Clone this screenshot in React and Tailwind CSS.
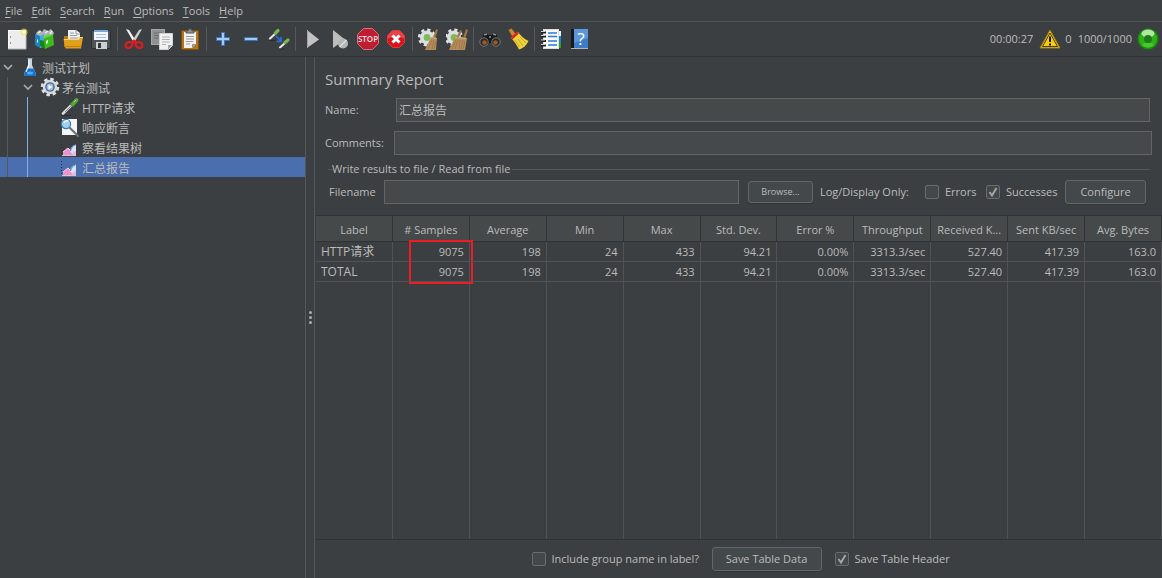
const MENUS = ['File', 'Edit', 'Search', 'Run', 'Options', 'Tools', 'Help']

const COLUMNS = [
  'Label', '# Samples', 'Average', 'Min', 'Max', 'Std. Dev.', 'Error %',
  'Throughput', 'Received K...', 'Sent KB/sec', 'Avg. Bytes',
]

const ROWS = [
  ['HTTP请求', '9075', '198', '24', '433', '94.21', '0.00%', '3313.3/sec', '527.40', '417.39', '163.0'],
  ['TOTAL', '9075', '198', '24', '433', '94.21', '0.00%', '3313.3/sec', '527.40', '417.39', '163.0'],
]

function Icon({ children }) {
  return (
    <svg width="22" height="22" viewBox="0 0 22 22" fill="none" aria-hidden="true">
      {children}
    </svg>
  )
}

/* ---------- toolbar icons ---------- */

function NewIcon() {
  return (
    <Icon>
      <rect x="2.5" y="2.5" width="17" height="18" fill="#ececec" stroke="#fafafa" />
      <path d="M2 21h18V5" stroke="#b5b5b5" />
      <path d="M4.5 8v2M4.5 14v2" stroke="#999" />
      <circle cx="18" cy="4" r="3.6" fill="#f3e65a" opacity="0.6" />
      <circle cx="18" cy="4" r="1.8" fill="#fffbd0" />
    </Icon>
  )
}

function TemplatesIcon() {
  return (
    <Icon>
      <path d="M2 5l3-3 3 2 2-3 4 2 3-2 3 4-3 6H3z" fill="#aeb4b6" />
      <path d="M4 5l3-2M11 5l3-2M16 6l2-3" stroke="#eef1f2" strokeWidth="1.4" />
      <path d="M1 6l5 2v12l-5-3z" fill="#1c84c4" />
      <path d="M6 8l4-2v13l-4 1z" fill="#46a9de" />
      <path d="M3 11l1 1v3l-1-1z" fill="#e3f4ff" />
      <path d="M6 12l5 1v8l-5-3z" fill="#16851d" />
      <path d="M10 10l9-3 1 10-9 4z" fill="#3fba1d" />
      <path d="M10 10l9-3-4-1-7 3z" fill="#6fd33f" />
      <path d="M12 13l2-1v3l-2 1z" fill="#d9ffc4" />
    </Icon>
  )
}

function OpenIcon() {
  return (
    <Icon>
      <path d="M2 8h6l2 2h9v9H2z" fill="#b97a0a" />
      <path d="M6 2h8l4 3v9H6z" fill="#efefef" />
      <path d="M14 2v4h4M8 5h4M8 7.500h7M8 10h8" stroke="#9da0a1" />
      <path d="M1.500 11h15l1-2h3.500l-2 11.500H3.500z" fill="#dfa01e" />
      <path d="M2 11.500h15l1-2h3" stroke="#f9d36b" />
      <path d="M3 18.500h16" stroke="#c0810f" />
    </Icon>
  )
}

function SaveIcon() {
  return (
    <Icon>
      <path d="M1.500 2.500h18l1 1v17h-18l-1-1z" fill="#4e5356" stroke="#2b2e30" />
      <rect x="4" y="2" width="14" height="10" fill="#f2f6fb" />
      <rect x="4" y="2" width="14" height="2" fill="#7ba6d8" />
      <path d="M6 6.500h10M6 9.500h10" stroke="#a5bfdf" />
      <rect x="6" y="14" width="11" height="7" fill="#cdd0d1" />
      <rect x="8" y="15" width="3" height="5" fill="#323638" />
    </Icon>
  )
}

function CutIcon() {
  return (
    <Icon>
      <path d="M3 1l3 1 7 11-2 2z" fill="#f2f2f2" />
      <path d="M19 1l-3 1-7 11 2 2z" fill="#cfcfcf" />
      <path d="M9 12.500l2-1 2 1 1 3h-6z" fill="#cf1f24" />
      <ellipse cx="6" cy="17" rx="3.500" ry="2.800" stroke="#df1c22" strokeWidth="2.200" transform="rotate(-25 6 17)" />
      <ellipse cx="16" cy="17" rx="3.500" ry="2.800" stroke="#df1c22" strokeWidth="2.200" transform="rotate(25 16 17)" />
    </Icon>
  )
}

function CopyIcon() {
  return (
    <Icon>
      <rect x="0.500" y="1.500" width="13" height="15" fill="#8f9192" stroke="#a5a7a8" />
      <path d="M3 5h8M3 7.500h8M3 10h5" stroke="#6c6e6f" />
      <path d="M8.500 5.500h13v12l-4 4h-9z" fill="#f1f1f1" stroke="#d2d2d2" />
      <path d="M11 9h8M11 11.500h8M11 14h8M11 16.500h4" stroke="#b4b4b4" />
      <path d="M21 17h-4v4.500z" fill="#a4a4a4" />
    </Icon>
  )
}

function PasteIcon() {
  return (
    <Icon>
      <rect x="2.500" y="2.500" width="17" height="19" rx="1" fill="#b3741c" stroke="#80500e" />
      <path d="M5 4h12v12l-4 4H5z" fill="#f1f1f1" />
      <path d="M7 8.500h8M7 11h8M7 13.500h7M7 16h4" stroke="#9c9c9c" />
      <path d="M17 16h-4v4z" fill="#9a9a9a" />
      <path d="M7 5V3h2l1-2h2l1 2h2v2z" fill="#8f9496" stroke="#54585a" />
    </Icon>
  )
}

function PlusIcon() {
  return (
    <Icon>
      <path d="M9.500 4.500h3v5h5v3h-5v5h-3v-5h-5v-3h5z" fill="#a3caf3" stroke="#3a74ba" />
    </Icon>
  )
}

function MinusIcon() {
  return (
    <Icon>
      <rect x="4.500" y="9.500" width="13" height="3" fill="#a3caf3" stroke="#3a74ba" />
    </Icon>
  )
}

function ToggleIcon() {
  return (
    <Icon>
      <path d="M2 10.500l6-5.500" stroke="#e4e4e4" strokeWidth="2.200" strokeLinecap="round" />
      <path d="M7.500 5l2.500-2.500" stroke="#78b750" strokeWidth="3.200" strokeLinecap="round" />
      <path d="M12 19.500l6-5.500" stroke="#e4e4e4" strokeWidth="2.200" strokeLinecap="round" />
      <path d="M17 14.500l3-2.500" stroke="#78b750" strokeWidth="3.200" strokeLinecap="round" />
      <path d="M8 8l4.500 4.500M13 9v4.500H8.500" stroke="#2573e6" strokeWidth="1.600" />
      <path d="M1 12.500h6M11 21h6" stroke="#2b2d2e" />
    </Icon>
  )
}

function StartIcon() {
  return (
    <Icon>
      <path d="M6 2l12 9.500L6 20z" fill="#c3c3c3" />
      <path d="M6.500 2v18" stroke="#a0a2a3" />
    </Icon>
  )
}

function StartNoTimersIcon() {
  return (
    <Icon>
      <path d="M4 2l12 9.500L4 20z" fill="#bdbdbd" />
      <circle cx="14" cy="15.500" r="5" fill="#b4b6b6" />
      <path d="M10.500 19l7-7" stroke="#dcdcdc" strokeWidth="1.600" />
    </Icon>
  )
}

function StopIcon() {
  return (
    <Icon>
      <path d="M6.500 0.500h9l6 6v9l-6 6h-9l-6-6v-9z" fill="#bf1e31" stroke="#d4707b" />
      <text x="11" y="14" textAnchor="middle" fontSize="8" fontWeight="600" fontFamily="Open Sans, sans-serif" fill="#f6dde0">
        STOP
      </text>
    </Icon>
  )
}

function ShutdownIcon() {
  return (
    <Icon>
      <path d="M7.500 2.500h7l5 5v7l-5 5h-7l-5-5v-7z" fill="#d9131a" stroke="#e0393e" />
      <path d="M7.500 3h7l4.500 4.500v3c-5-2-11-2-16 0v-3z" fill="#ee5a5d" opacity="0.700" />
      <path d="M7.500 7.500l7 7M14.500 7.500l-7 7" stroke="#fff" strokeWidth="3" />
    </Icon>
  )
}

function GearBase({ cx }) {
  return (
    <g>
      <circle cx={cx} cy="9.500" r="7.800" stroke="#dfe1e2" strokeWidth="2.600" strokeDasharray="3.200 2.926" />
      <circle cx={cx} cy="9.500" r="7" fill="#dcdfe0" />
      <circle cx={cx} cy="9.500" r="3.400" fill="#97ab8c" />
      <circle cx={cx} cy="9.500" r="2.600" fill="#6fc637" />
    </g>
  )
}

function ClearIcon() {
  return (
    <Icon>
      <GearBase cx="9" />
      <path d="M18 1l2 1-3 9-2-1z" fill="#9c7548" />
      <path d="M13 9l6 1-1 12H7z" fill="#b58d5d" />
      <path d="M14 12l-4 9M16 12l-2 9M18 13l-2 8" stroke="#94703f" strokeWidth="0.700" />
      <path d="M13 9.500l5.500 1" stroke="#cfae82" />
    </Icon>
  )
}

function ClearAllIcon() {
  return (
    <Icon>
      <GearBase cx="8" />
      <path d="M14 2l2 1-4 8-2-1zM20 1l2 1-3 9-2-1z" fill="#9c7548" />
      <path d="M9 9l12 1-2 12H3z" fill="#b58d5d" />
      <path d="M10 12l-4 9M12 12l-3 9M14 12l-1 9M17 12l-2 9M19 13l-2 8" stroke="#94703f" strokeWidth="0.700" />
      <path d="M9 9.500l11 1" stroke="#cfae82" />
    </Icon>
  )
}

function SearchIcon() {
  return (
    <Icon>
      <path d="M4 8c0-3 4-4 5-1h4c1-3 5-2 5 1l3 6-4 4-5-3h-2l-5 3-4-4z" fill="#17191a" />
      <path d="M5 7l3-1M14 6l3 1M10 9h2" stroke="#8f9394" strokeWidth="1.500" />
      <circle cx="5" cy="14" r="4.200" fill="#24282a" stroke="#777c7e" />
      <circle cx="17" cy="14" r="4.200" fill="#24282a" stroke="#777c7e" />
      <circle cx="5.500" cy="14.500" r="2.300" fill="#a5571f" />
      <circle cx="16.500" cy="14.500" r="2.300" fill="#a5571f" />
    </Icon>
  )
}

function ResetSearchIcon() {
  return (
    <Icon>
      <path d="M1.500 2l3-1.500L9 6l-3.500 3z" fill="#c98733" stroke="#8a571a" strokeWidth="0.600" />
      <path d="M4 10l7-6c3 4 6 7 10.500 9-2 4.500-5 7-9.500 8.500C9 16 7 13 4 10z" fill="#ecd03c" />
      <path d="M8 12l4.500 7M11 11l5 7M13 9l6 6" stroke="#c4a01f" strokeWidth="0.800" />
      <path d="M4.500 10.500l6.500-6" stroke="#d8251d" strokeWidth="2.600" />
    </Icon>
  )
}

function FunctionHelperIcon() {
  return (
    <Icon>
      <rect x="18" y="3" width="3" height="5" fill="#f0f0f0" />
      <rect x="18" y="8" width="3" height="6" fill="#1784e0" />
      <rect x="18" y="14" width="3" height="6" fill="#22a825" />
      <rect x="3.500" y="1.500" width="15" height="19" fill="#fafafa" stroke="#dcdcdc" />
      <path d="M8 5h9M8 8.500h9M8 13h9M8 17h9" stroke="#2f78dc" strokeWidth="1.400" />
      <path d="M1 4.500h5M1 8.500h5M1 13h5M1 17.500h5" stroke="#1d1f20" strokeWidth="2" />
      <path d="M1 3.500h4M1 7.500h4M1 12h4M1 16.500h4" stroke="#d0d0d0" />
    </Icon>
  )
}

function HelpIcon() {
  return (
    <Icon>
      <rect x="3" y="1" width="3" height="20" fill="#15191d" />
      <rect x="6" y="1" width="14" height="20" fill="#3f7cc8" />
      <path d="M6 1h14v9L6 15z" fill="#5c97dc" />
      <path d="M3 20.500h17" stroke="#a9b6c6" />
      <text x="13" y="17" textAnchor="middle" fontSize="17" fontFamily="Open Sans, sans-serif" fill="#fff">
        ?
      </text>
    </Icon>
  )
}

const TOOL_GROUPS = [
  [['New', NewIcon], ['Templates', TemplatesIcon], ['Open', OpenIcon], ['Save', SaveIcon]],
  [['Cut', CutIcon], ['Copy', CopyIcon], ['Paste', PasteIcon]],
  [['Expand all', PlusIcon], ['Collapse all', MinusIcon], ['Toggle', ToggleIcon]],
  [['Start', StartIcon], ['Start no pauses', StartNoTimersIcon], ['Stop', StopIcon], ['Shutdown', ShutdownIcon]],
  [['Clear', ClearIcon], ['Clear all', ClearAllIcon]],
  [['Search tree', SearchIcon], ['Reset search', ResetSearchIcon]],
  [['Function helper', FunctionHelperIcon], ['Help', HelpIcon]],
]

function WarningIcon() {
  return (
    <Icon>
      <path d="M11 2L21 20H1z" fill="#f5cb14" stroke="#a07e0a" strokeLinejoin="round" />
      <path d="M11 5l7.500 13.500h-15z" stroke="#4a3a05" />
      <path d="M11 8.500v5.500M11 15.500v2" stroke="#1e1a08" strokeWidth="2" />
    </Icon>
  )
}

function RunningIcon() {
  return (
    <Icon>
      <circle cx="11" cy="11" r="10.500" fill="#1b8a0e" />
      <circle cx="11" cy="11" r="9" fill="#2fb01b" />
      <ellipse cx="11" cy="5.500" rx="6.500" ry="4" fill="#c5f3b6" opacity="0.850" />
      <ellipse cx="11" cy="17" rx="5.500" ry="2.500" fill="#5fe03c" opacity="0.500" />
      <circle cx="11" cy="11" r="4" fill="#1f7a1a" />
    </Icon>
  )
}

/* ---------- tree icons ---------- */

function FlaskIcon() {
  return (
    <svg width="20" height="20" viewBox="0 0 20 20" fill="none">
      <path d="M8 2h4v6l4 9c0 1.500-1 2-2 2H6c-1 0-2-.5-2-2l4-9z" fill="#c8d6e0" />
      <path d="M6.500 11.500h7L16 17c0 1.500-1 2-2 2H6c-1 0-2-.5-2-2z" fill="#1873cf" />
      <path d="M9 3v5l-3 7" stroke="#fff" />
      <ellipse cx="10" cy="16" rx="3" ry="1.500" fill="#59a9ee" />
      <path d="M7.500 1.500h5" stroke="#9ba7af" />
    </svg>
  )
}

function ThreadGroupIcon() {
  return (
    <svg width="20" height="20" viewBox="0 0 20 20" fill="none">
      <circle cx="10" cy="10" r="7.800" stroke="#dddfe0" strokeWidth="3" strokeDasharray="3.400 2.726" />
      <circle cx="10" cy="10" r="7.200" fill="#d8dbdc" />
      <circle cx="10" cy="10" r="4.800" fill="#4a6c9c" />
      <circle cx="10" cy="10" r="3.400" fill="#9dbbe0" />
      <path d="M8.500 7.500l4 2.500-4 2.500z" fill="#fff" />
    </svg>
  )
}

function SamplerIcon() {
  return (
    <svg width="20" height="20" viewBox="0 0 20 20" fill="none">
      <path d="M3 16.500L11.500 8" stroke="#dadcdd" strokeWidth="2.600" strokeLinecap="round" />
      <path d="M5 15l6-6" stroke="#858a8c" />
      <path d="M10 6l4 4" stroke="#37702a" strokeWidth="2" />
      <path d="M13 7l3.500-4" stroke="#5ba53f" strokeWidth="4" strokeLinecap="round" />
      <path d="M14 5l2-2" stroke="#a3d98b" />
      <path d="M1 18.500h10" stroke="#2b2d2e" />
    </svg>
  )
}

function AssertionIcon() {
  return (
    <svg width="20" height="20" viewBox="0 0 20 20" fill="none">
      <path d="M2 2h15v16H2z" fill="#f6f6f6" />
      <path d="M10 11l8 8" stroke="#6d7375" strokeWidth="2.200" strokeLinecap="round" />
      <circle cx="6" cy="7" r="4.600" fill="#9fd0ee" stroke="#3d79ab" strokeWidth="1.200" />
      <path d="M4 6c1-2 3-2.500 4.500-2" stroke="#eaf7ff" strokeWidth="1.400" />
    </svg>
  )
}

function ListenerIcon() {
  return (
    <svg width="20" height="20" viewBox="0 0 20 20" fill="none">
      <path d="M1.500 4v14" stroke="#2a2c2d" strokeDasharray="1 2" />
      <path d="M3 18v-3l5-4 4 4v3z" fill="#ef8fce" />
      <path d="M3 15l5-4 2 2" stroke="#fbd3ec" />
      <path d="M10 14c1-4 3-6 6-6.500v8l-3 2.500z" fill="#d5e5f9" />
      <path d="M10.500 14c1-3.500 2.500-5.500 5-6" stroke="#5585d2" />
      <path d="M13 15l3-1v4h-4z" fill="#f3b4de" />
      <path d="M2 18.500h14" stroke="#c9cccd" />
    </svg>
  )
}

const TREE = [
  { label: '测试计划', depth: 0, icon: FlaskIcon, open: true },
  { label: '茅台测试', depth: 1, icon: ThreadGroupIcon, open: true },
  { label: 'HTTP请求', depth: 2, icon: SamplerIcon },
  { label: '响应断言', depth: 2, icon: AssertionIcon },
  { label: '察看结果树', depth: 2, icon: ListenerIcon },
  { label: '汇总报告', depth: 2, icon: ListenerIcon, selected: true },
]

function Chevron() {
  return (
    <svg className="ml-[3px]" width="10" height="10" viewBox="0 0 10 10" fill="none">
      <path d="M1 3l4 4 4-4" stroke="#adadad" strokeWidth="1.600" />
    </svg>
  )
}

function TreeRow({ item }) {
  const NodeIcon = item.icon
  return (
    <li
      role="treeitem"
      aria-selected={!!item.selected}
      className={`flex h-5 items-center text-xs ${item.selected ? 'bg-[#4b6eaf]' : ''}`}
    >
      {item.depth > 0 && <span className="flex h-5 w-5 pl-[7px]"><i className="w-px bg-[#56595b]" /></span>}
      {item.depth > 1 && <span className="flex h-5 w-5 pl-[7px]"><i className="w-px bg-[#7db4e6]" /></span>}
      <span className="w-5">{item.open && <Chevron />}</span>
      <NodeIcon />
      <span className="pt-[3px] pl-[2px] leading-4">{item.label}</span>
    </li>
  )
}

/* ---------- form controls ---------- */

function TextField({ className, ...props }) {
  return (
    <input
      type="text"
      className={`h-6 min-w-0 border border-[#646464] bg-[#45494a] px-[2px] text-xs outline-none ${className}`}
      {...props}
    />
  )
}

function CheckBox({ label, checked, className }) {
  return (
    <label className={`flex items-center gap-[6px] whitespace-nowrap ${className}`}>
      <span className="grid">
        <input
          type="checkbox"
          defaultChecked={checked}
          className="peer col-start-1 row-start-1 size-[14px] appearance-none rounded-xs border border-[#6b6b6b] bg-[#43494a]"
        />
        <svg
          className="pointer-events-none invisible col-start-1 row-start-1 peer-checked:visible"
          width="14" height="14" viewBox="0 0 14 14" fill="none"
        >
          <path d="M3.500 7l2.500 3.500L10.500 3" stroke="#a7a7a7" strokeWidth="1.900" />
        </svg>
      </span>
      {label}
    </label>
  )
}

function Button({ className, children }) {
  return (
    <button
      type="button"
      className={`rounded-[3px] border border-[#646667] bg-[#43494a] whitespace-nowrap shadow-[0_1px_1px_#333637] ${className}`}
    >
      {children}
    </button>
  )
}

function SummaryTable() {
  return (
    <table className="h-full w-full table-fixed border-separate border-spacing-0">
      <thead>
        <tr className="h-[27px]">
          {COLUMNS.map((name) => (
            <th
              key={name}
              className="border-y border-r border-[#303335] bg-[#45494a] pt-[3px] leading-4 font-normal whitespace-nowrap"
            >
              {name}
            </th>
          ))}
        </tr>
      </thead>
      <tbody>
        {ROWS.map((row, r) => (
          <tr key={row[0]} className="h-5">
            {row.map((cell, c) => (
              <td
                key={c}
                className={`relative border-r border-b border-[#505355] px-[5px] leading-4 ${c === 0 ? 'text-left text-xs' : 'text-right'}`}
              >
                {cell}
                {r === 0 && c === 1 && (
                  <span className="absolute -top-[2px] -right-1 h-11 w-16 border-2 border-[#ee1c25]" />
                )}
              </td>
            ))}
          </tr>
        ))}
        {/* empty row keeps the column rules going to the bottom */}
        <tr>
          {COLUMNS.map((name) => (
            <td key={name} className="border-r border-[#505355]" />
          ))}
        </tr>
      </tbody>
    </table>
  )
}

export default function App() {
  return (
    <div className="flex h-screen flex-col bg-[#3c3f41] font-['Open_Sans','Noto_Sans_CJK_SC',sans-serif] text-[11px] text-[#bbbbbb]">
      <nav className="flex h-[22px] items-center gap-[9px] border-b border-[#515456] px-[5px]">
        {MENUS.map((name) => (
          <button key={name} type="button" className="leading-4">
            <span className="underline underline-offset-2">{name[0]}</span>
            {name.slice(1)}
          </button>
        ))}
      </nav>

      <div className="flex h-[35px] items-center border-b border-[#303335] pl-[3px]">
        {TOOL_GROUPS.map((group, i) => (
          <div key={i} className="flex items-center">
            {i > 0 && <span className="mx-[2px] h-6 w-px bg-[#56595b]" />}
            {group.map(([title, ToolIcon]) => (
              <button key={title} type="button" title={title} aria-label={title} className="flex h-7 w-7 items-center justify-center">
                <ToolIcon />
              </button>
            ))}
          </div>
        ))}
        <div className="ml-auto flex items-center pr-[3px]">
          <span>00:00:27</span>
          <span className="ml-[6px] flex items-center gap-1"><WarningIcon />0</span>
          <span className="mr-[5px] ml-[6px]">1000/1000</span>
          <RunningIcon />
        </div>
      </div>

      <div className="flex min-h-0 flex-1">
        <aside className="w-[306px] shrink-0 border-r border-[#555859]">
          <ul role="tree">
            {TREE.map((item) => <TreeRow key={item.label} item={item} />)}
          </ul>
        </aside>

        <div className="flex w-2 shrink-0 flex-col items-center justify-center gap-[2px]">
          <i className="size-[3px] rounded-full bg-[#adadad]" />
          <i className="size-[3px] rounded-full bg-[#adadad]" />
          <i className="size-[3px] rounded-full bg-[#adadad]" />
        </div>

        <main className="flex min-w-0 flex-1 flex-col border-l border-[#555859] pl-px">
          <h1 className="mt-[10px] px-[9px] text-[15px] leading-6">Summary Report</h1>

          <div className="mt-[7px] flex items-center pr-3 pl-[9px]">
            <label htmlFor="name" className="w-[71px]">Name:</label>
            <TextField id="name" defaultValue="汇总报告" className="flex-1" />
          </div>
          <div className="mt-[9px] flex items-center pr-[10px] pl-[9px]">
            <label htmlFor="comments" className="w-[69px]">Comments:</label>
            <TextField id="comments" className="flex-1" />
          </div>

          <fieldset className="mx-3 mt-1 min-w-0 border-t border-[#555859]">
            <legend className="ml-1 pr-[2px] leading-5">Write results to file / Read from file</legend>
            <div className="mt-px flex items-center pr-1">
              <label htmlFor="filename" className="w-14 pl-px">Filename</label>
              <TextField id="filename" className="flex-1" />
              <Button className="ml-[9px] h-[22px] w-[65px] text-[9px]">Browse...</Button>
              <span className="ml-[7px] w-[105px] whitespace-nowrap">Log/Display Only:</span>
              <CheckBox label="Errors" className="w-[61px]" />
              <CheckBox label="Successes" checked className="w-[79px]" />
              <Button className="h-6 w-[81px]">Configure</Button>
            </div>
          </fieldset>

          <div className="mt-[11px] min-h-0 flex-1">
            <SummaryTable />
          </div>

          <div className="flex h-[39px] items-center justify-center border-t border-[#303335] pl-1">
            <CheckBox label="Include group name in label?" className="w-[180px]" />
            <Button className="mr-[13px] h-6 w-[110px]">Save Table Data</Button>
            <CheckBox label="Save Table Header" checked className="w-[116px]" />
          </div>
        </main>
      </div>
    </div>
  )
}
